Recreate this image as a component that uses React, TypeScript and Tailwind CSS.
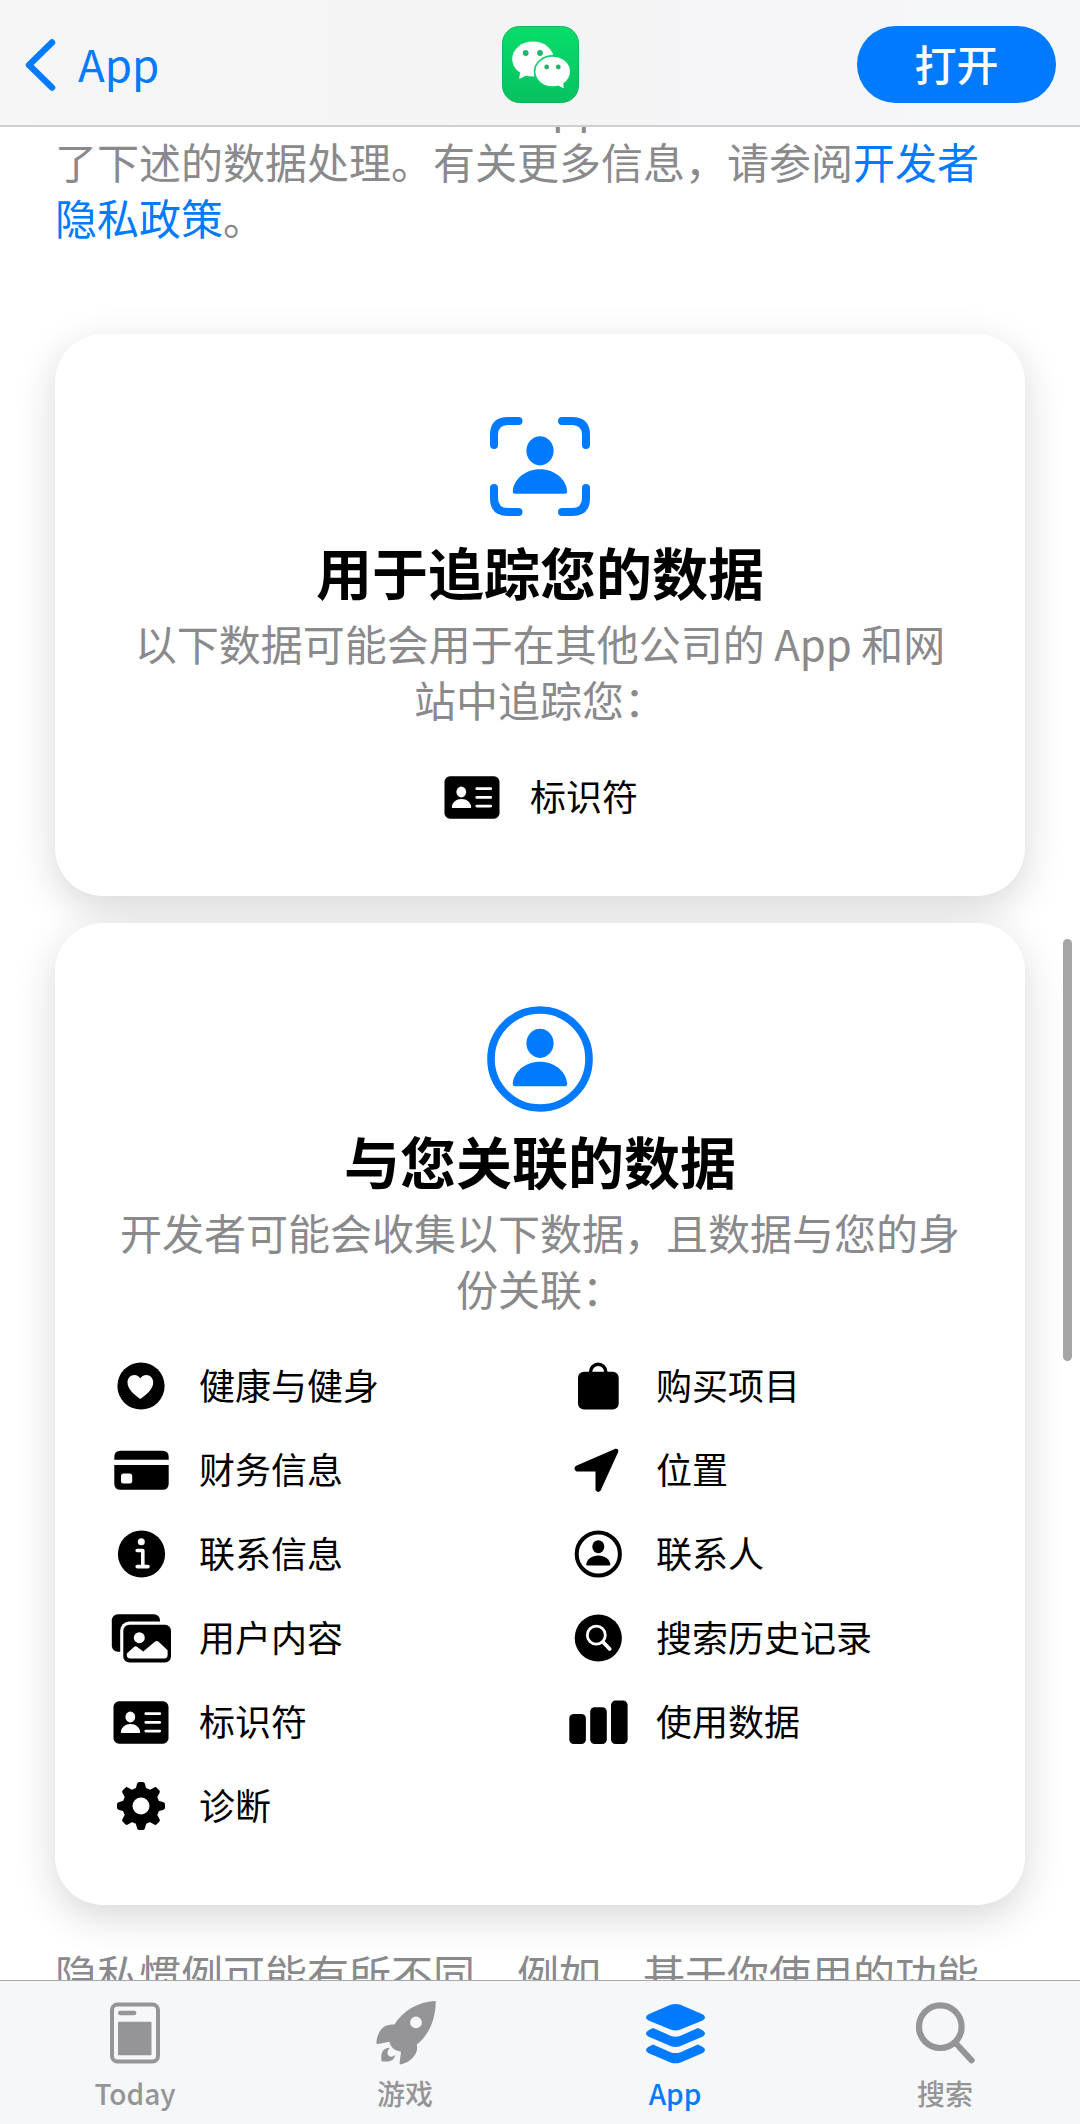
import React from 'react';

const Person = () => (
  <>
    <ellipse cx="53" cy="37.3" rx="13.6" ry="14.6" />
    <path d="M28 80.3 C26.4 80.3 25.7 79.4 25.8 77.8 C26.4 66 38 55.7 53 55.7 C68 55.7 79.6 66 80.2 77.8 C80.3 79.4 79.6 80.3 78 80.3 Z" />
  </>
);

const TrackingIcon = () => (
  <svg width="106" height="106" viewBox="0 0 106 106" fill="#007aff" aria-hidden="true">
    <g fill="none" stroke="#007aff" strokeWidth="8" strokeLinecap="round">
      <path d="M7 28 V18 Q7 4 21 4 H31.500" />
      <path d="M75 4 H85 Q99 4 99 18 V28" />
      <path d="M99 71 V81 Q99 95 85 95 H75" />
      <path d="M31.500 95 H21 Q7 95 7 81 V71" />
    </g>
    <g transform="translate(0 -3.500)">
      <Person />
    </g>
  </svg>
);

const LinkedIcon = () => (
  <svg width="106" height="106" viewBox="0 0 106 106" fill="#007aff" aria-hidden="true">
    <circle cx="53" cy="53" r="49" fill="none" stroke="#007aff" strokeWidth="7.6" />
    <Person />
  </svg>
);

const HealthIcon = () => (
  <>
    <circle cx="30" cy="30" r="23.600" />
    <path
      fill="#fff"
      d="M29.300 43 C24 39.200 16.500 33.500 16.500 26.500 C16.500 22 19.500 19 23.300 19 C26 19 28 20.300 29.300 22.600 C30.600 20.300 32.600 19 35.300 19 C39.200 19 42.200 22 42.200 26.500 C42.200 33.500 34.600 39.200 29.300 43 Z"
    />
  </>
);

const FinanceIcon = () => (
  <>
    <path d="M3.300 19.700 V17 Q3.300 10.700 9.600 10.700 H51.400 Q57.700 10.700 57.700 17 V19.700 Z" />
    <path d="M3.300 25 H57.700 V43.400 Q57.700 49.700 51.400 49.700 H9.600 Q3.300 49.700 3.300 43.400 Z" />
    <rect x="10" y="33.500" width="11.200" height="10" rx="2.500" fill="#fff" />
  </>
);

const InfoIcon = () => (
  <>
    <circle cx="30.500" cy="30" r="23.600" />
    <circle cx="30.300" cy="17.800" r="3.500" fill="#fff" />
    <path d="M26.200 26.500 H31.800 V42.600 M26.200 42.600 H37" fill="none" stroke="#fff" strokeWidth="3.600" strokeLinecap="round" strokeLinejoin="round" />
  </>
);

const PhotosIcon = () => (
  <>
    <rect x="0.800" y="6.300" width="48.200" height="37.400" rx="6" />
    <rect x="9.200" y="13.600" width="54" height="43.800" rx="9" fill="#fff" />
    <rect x="12.300" y="16.700" width="47.700" height="37.700" rx="6" />
    <circle cx="28.300" cy="29.700" r="5.500" fill="#fff" />
    <path
      fill="#fff"
      d="M15.800 45.500 L23 38.900 Q24.700 37.500 26.400 38.900 L32.200 43.500 L43.800 33.700 Q45.700 32.400 47.600 33.700 L56.600 42.200 V47 Q56.600 50.400 53.200 50.400 H19.200 Q15.800 50.400 15.800 47 Z"
    />
  </>
);

const IdCardIcon = () => (
  <>
    <rect x="2.500" y="9.300" width="55" height="42.400" rx="5.500" />
    <ellipse cx="19.300" cy="25" rx="4.900" ry="5.400" fill="#fff" />
    <path d="M10.700 41 Q9.700 41 9.800 39.900 C10.300 35.500 14.300 32 19.500 32 C24.700 32 28.700 35.500 29.200 39.900 Q29.300 41 28.300 41 Z" fill="#fff" />
    <path d="M34.800 21.700 H48.700 M34.800 30.400 H48.700 M34.800 39.100 H48.700" stroke="#fff" strokeWidth="2.800" strokeLinecap="round" />
  </>
);

const GearIcon = () => (
  <>
    <circle cx="30" cy="30" r="13.500" fill="none" stroke="#000" strokeWidth="10" />
    {[0, 45, 90, 135, 180, 225, 270, 315].map((angle) => (
      <path
        key={angle}
        transform={`rotate(${angle} 30 30)`}
        d="M24 15 L26.200 7.500 Q26.700 6 28.200 6 H31.800 Q33.300 6 33.800 7.500 L36 15 Z"
      />
    ))}
  </>
);

const BagIcon = () => (
  <>
    <rect x="10" y="15.700" width="40.700" height="37.700" rx="6" />
    <path d="M22.600 17 V15.800 A7.600 7.600 0 0 1 37.800 15.800 V17" fill="none" stroke="#000" strokeWidth="3.400" />
  </>
);

const LocationIcon = () => (
  <path
    d="M8.800 27.200 L47.500 10.300 Q49.200 9.800 48.700 11.600 L31.500 49.400 Q30.300 51.500 29 49.400 V31.200 Q29 30 27.800 30 H9 Q7 28.800 8.800 27.200 Z"
    stroke="#000"
    strokeWidth="3"
    strokeLinejoin="round"
  />
);

const ContactIcon = () => (
  <>
    <circle cx="30.300" cy="30" r="21.600" fill="none" stroke="#000" strokeWidth="4" />
    <ellipse cx="30.300" cy="22.700" rx="6" ry="6.500" />
    <path d="M19.500 41.500 Q18.200 41.500 18.300 40.300 C18.800 35.500 24 31.600 30.300 31.600 C36.600 31.600 41.800 35.500 42.300 40.300 Q42.400 41.500 41.100 41.500 Z" />
  </>
);

const SearchHistoryIcon = () => (
  <>
    <circle cx="30.300" cy="30" r="23.600" />
    <circle cx="28.300" cy="27.200" r="9" fill="none" stroke="#fff" strokeWidth="2.800" />
    <path d="M35 34 L41.700 41" stroke="#fff" strokeWidth="3.800" strokeLinecap="round" />
  </>
);

const UsageIcon = () => (
  <>
    <rect x="1.300" y="22" width="16.600" height="30" rx="4.500" />
    <rect x="22.200" y="15.300" width="16.600" height="36.700" rx="4.500" />
    <rect x="43" y="8.600" width="16.600" height="43.400" rx="4.500" />
  </>
);

const linkedData = [
  { icon: HealthIcon, label: '健康与健身' },
  { icon: BagIcon, label: '购买项目' },
  { icon: FinanceIcon, label: '财务信息' },
  { icon: LocationIcon, label: '位置' },
  { icon: InfoIcon, label: '联系信息' },
  { icon: ContactIcon, label: '联系人' },
  { icon: PhotosIcon, label: '用户内容' },
  { icon: SearchHistoryIcon, label: '搜索历史记录' },
  { icon: IdCardIcon, label: '标识符' },
  { icon: UsageIcon, label: '使用数据' },
  { icon: GearIcon, label: '诊断' },
];

const TodayTabIcon = () => (
  <>
    <rect x="9" y="3.500" width="46" height="57" rx="5.500" fill="none" stroke="currentColor" strokeWidth="4" />
    <rect x="15" y="9.700" width="18.400" height="4.600" rx="2.300" />
    <rect x="15" y="20.700" width="33.500" height="33.500" rx="1" />
  </>
);

const GamesTabIcon = () => (
  <>
    <path
      fillRule="evenodd"
      d="M61.400 0 Q62.700 -0.200 62.700 1.200 C62.700 19 55 35 43.800 43.500 C46 52.500 38 61 28.300 63.300 Q26.400 63.700 26.600 62 L28 50.700 C21.500 49.500 17.500 46.500 16.400 40.800 L5 43 Q3.300 43.200 3.400 41.500 C4.500 30.500 10 22.500 21.300 23.500 C30.500 9.500 44 1.500 61.400 0 Z M43 15.500 A5.900 5.900 0 1 0 43 27.300 A5.900 5.900 0 1 0 43 15.500 Z"
    />
    <path d="M15.500 46.800 C10.500 47.500 8.300 51.500 8.300 55.500 V59 Q8.300 60.500 9.800 60.500 H13.500 C18.500 60.500 21.800 58 22.300 53.500 C20.500 55.800 17.500 56.500 15.800 54.800 C14 53 14 49.500 16.800 47 Z" />
  </>
);

const AppsTabIcon = () => (
  <>
    <path d="M27.500 3.800 Q32.500 2 37.500 3.800 L59.500 13.200 Q64.500 16.400 59.500 19.500 L37.500 28.600 Q32.500 30.400 27.500 28.600 L5.500 19.500 Q0.500 16.400 5.500 13.200 Z" />
    <path d="M10 27 L27.500 34.700 Q32.500 36.600 37.500 34.700 L55 27 L59.800 29.500 Q64.200 32.600 59.800 35.500 L37.500 45 Q32.500 46.800 27.500 45 L5.200 35.500 Q0.800 32.600 5.200 29.500 Z" />
    <path d="M10 43.500 L27.500 51.200 Q32.500 53 37.500 51.200 L55 43.500 L59.800 46 Q64.200 49 59.800 52 L37.500 61.400 Q32.500 63.200 27.500 61.400 L5.200 52 Q0.800 49 5.200 46 Z" />
  </>
);

const SearchTabIcon = () => (
  <>
    <circle cx="27.300" cy="25.700" r="21.300" fill="none" stroke="currentColor" strokeWidth="6.200" />
    <path d="M42.800 42.200 L58.600 59.400" stroke="currentColor" strokeWidth="6" strokeLinecap="round" />
  </>
);

const tabs = [
  { icon: TodayTabIcon, label: 'Today', active: false },
  { icon: GamesTabIcon, label: '游戏', active: false },
  { icon: AppsTabIcon, label: 'App', active: true },
  { icon: SearchTabIcon, label: '搜索', active: false },
];

const DataItem = ({ icon: Icon, label }: { icon: React.ComponentType; label: string }) => (
  <li className="flex h-[84px] items-center gap-7 text-[36px] leading-[52px] text-black">
    <svg width="60" height="60" viewBox="0 0 60 60" className="shrink-0" aria-hidden="true">
      <Icon />
    </svg>
    <span className="pb-1">{label}</span>
  </li>
);

const PrivacyCard = ({
  icon,
  title,
  description,
  children,
}: {
  icon: React.ReactNode;
  title: string;
  description: string;
  children: React.ReactNode;
}) => (
  <section className="rounded-[48px] bg-white px-14 pt-[83px] pb-[57px] shadow-[0_12px_40px_rgba(0,0,0,0.16)]">
    <div className="flex justify-center">{icon}</div>
    <h2 className="mt-4 text-center text-[56px] leading-[64px] font-bold text-black">{title}</h2>
    <p className="mt-3 px-1 text-center text-[42px] leading-[56px] text-[#8a8a8d]">{description}</p>
    {children}
  </section>
);

const WeChatLogo = () => (
  <svg width="77" height="77" viewBox="0 0 77 77" role="img" aria-label="微信">
    <defs>
      <linearGradient id="wechat-bg" x1="0" y1="0" x2="0" y2="1">
        <stop offset="0" stopColor="#07dd6b" />
        <stop offset="1" stopColor="#06c160" />
      </linearGradient>
    </defs>
    <rect x="0.500" y="0.500" width="76" height="76" rx="17" fill="url(#wechat-bg)" stroke="#12b45f" />
    <g fill="#fff">
      <ellipse cx="31" cy="33" rx="20.800" ry="17.500" />
      <path d="M18.500 44 L17.200 52.200 Q17.300 53 18.200 52.600 L26 48.500 Z" />
    </g>
    <ellipse cx="50.700" cy="45.500" rx="19" ry="16.400" fill="#07cf66" />
    <g fill="#fff">
      <ellipse cx="50.700" cy="45.500" rx="17.300" ry="14.700" />
      <path d="M55 58.500 L60.800 61.900 Q61.800 62.200 61.700 61.300 L60.800 54.500 Z" />
    </g>
    <g fill="#1eb768">
      <circle cx="23.700" cy="27" r="2.900" />
      <circle cx="38" cy="27" r="2.900" />
      <circle cx="44.700" cy="41" r="2.400" />
      <circle cx="56.300" cy="41" r="2.400" />
    </g>
  </svg>
);

const App = () => {
  return (
    <div className="relative flex h-screen flex-col overflow-hidden bg-white font-['Noto_Sans_CJK_SC',sans-serif]">
      <header className="grid h-[127px] shrink-0 grid-cols-3 items-center border-b-2 border-[#cfcfd1] bg-linear-to-r from-[#f6f6f6] via-[#f4f4f5] to-[#f6f7fa] px-6 pt-1">
        <a href="#" className="flex items-center gap-[22px] justify-self-start text-[44px] leading-[60px] text-[#007aff]">
          <svg width="32" height="54" viewBox="0 0 32 54" fill="none" stroke="#007aff" strokeWidth="6.500" strokeLinecap="round" strokeLinejoin="round" aria-hidden="true">
            <path d="M28 4.500 L5 27 L28 49.500" />
          </svg>
          <span className="pb-1">App</span>
        </a>
        <div className="justify-self-center">
          <WeChatLogo />
        </div>
        <button type="button" className="h-[77px] w-[199px] justify-self-end rounded-full bg-[#007aff] pb-1 text-[42px] leading-[60px] font-medium text-white">
          打开
        </button>
      </header>

      <main className="min-h-0 flex-1 overflow-hidden px-[55px]">
        <p className="-mt-[50px] pr-5 text-[42px] leading-[56px] text-[#8a8a8d]">
          开发者“微信”已表明该 App 的隐私实践可能包括了下述的数据处理。有关更多信息，请参阅
          <a href="#" className="text-[#007aff]">开发者隐私政策</a>。
        </p>

        <div className="mt-[89px] flex flex-col gap-[27px]">
          <PrivacyCard
            icon={<TrackingIcon />}
            title="用于追踪您的数据"
            description="以下数据可能会用于在其他公司的 App 和网站中追踪您："
          >
            <ul className="mt-7 flex justify-center">
              <DataItem icon={IdCardIcon} label="标识符" />
            </ul>
          </PrivacyCard>

          <PrivacyCard
            icon={<LinkedIcon />}
            title="与您关联的数据"
            description="开发者可能会收集以下数据，且数据与您的身份关联："
          >
            <ul className="mt-7 grid grid-cols-2 gap-x-14">
              {linkedData.map((item) => (
                <DataItem key={item.label} icon={item.icon} label={item.label} />
              ))}
            </ul>
          </PrivacyCard>
        </div>

        <p className="mt-10 pr-5 text-[42px] leading-[56px] text-[#8a8a8d]">
          隐私惯例可能有所不同，例如，基于你使用的功能或你的年龄。
          <a href="#" className="text-[#007aff]">了解更多</a>
        </p>
      </main>

      <nav className="grid h-36 shrink-0 grid-cols-4 border-t border-[#a9a9ab] bg-[#f6f7f8] pt-5">
        {tabs.map(({ icon: Icon, label, active }) => (
          <a
            key={label}
            href="#"
            className={`flex flex-col items-center gap-2 text-[28px] leading-[40px] font-medium ${active ? 'text-[#007aff]' : 'text-[#959597]'}`}
          >
            <svg width="64" height="64" viewBox="0 0 64 64" fill="currentColor" aria-hidden="true">
              <Icon />
            </svg>
            {label}
          </a>
        ))}
      </nav>

      {/* scroll indicator */}
      <div className="absolute top-[939px] right-2 h-[422px] w-[9px] rounded-full bg-[#a5a5a5]" />
    </div>
  );
};

export default App;
